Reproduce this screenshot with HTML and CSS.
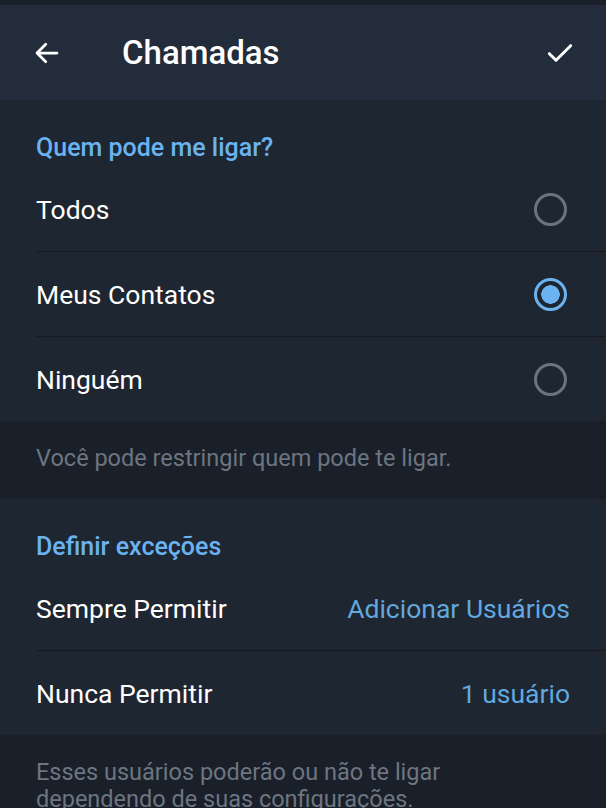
FILE: index.html
```html
<!DOCTYPE html>
<html lang="pt">
<head>
    <meta charset="UTF-8">
    <title>Chamadas</title>
    <link rel="stylesheet" href="styles.css">
</head>
<body>
    <div class="status-strip"></div>
    <header class="toolbar">
        <svg class="icon back" viewBox="0 0 24 24" width="30" height="30">
            <path d="M20 12H4.5M11 5l-7 7 7 7" fill="none" stroke="#fff" stroke-width="2.2" stroke-linecap="round" stroke-linejoin="round"/>
        </svg>
        <h1>Chamadas</h1>
        <svg class="icon done" viewBox="0 0 24 24" width="32" height="32">
            <path d="M4 12.5l5 5L20 6.5" fill="none" stroke="#fff" stroke-width="2.2" stroke-linecap="round" stroke-linejoin="round"/>
        </svg>
    </header>

    <section class="group">
        <h2>Quem pode me ligar?</h2>
        <div class="row">
            <span>Todos</span>
            <span class="radio"></span>
        </div>
        <div class="row">
            <span>Meus Contatos</span>
            <span class="radio checked"></span>
        </div>
        <div class="row last">
            <span>Ninguém</span>
            <span class="radio"></span>
        </div>
    </section>
    <p class="hint">Você pode restringir quem pode te ligar.</p>

    <section class="group">
        <h2>Definir exceções</h2>
        <div class="row">
            <span>Sempre Permitir</span>
            <span class="value">Adicionar Usuários</span>
        </div>
        <div class="row last">
            <span>Nunca Permitir</span>
            <span class="value">1 usuário</span>
        </div>
    </section>
    <p class="hint">Esses usuários poderão ou não te ligar<br>dependendo de suas configurações.</p>
</body>
</html>
```

FILE: styles.css
```css
body {
    margin: 0;
    background-color: #19202a;
    font-family: Roboto, "Noto Sans", sans-serif;
    color: #fff;
    overflow: hidden;
}

.status-strip {
    height: 5px;
    background-color: #1a2029;
}

.toolbar {
    height: 95px;
    background-color: #232c3a;
    display: flex;
    align-items: center;
    padding: 0 30px 0 32px;
}

.toolbar h1 {
    flex: 1;
    margin: 0 0 0 60px;
    font-size: 33px;
    font-weight: 500;
}

.icon {
    display: block;
}

.group {
    background-color: #1e2631;
    padding-left: 36px;
}

.group h2 {
    margin: 0;
    padding: 33px 0 0;
    height: 67px;
    box-sizing: border-box;
    font-size: 25px;
    line-height: 29px;
    font-weight: 500;
    color: #6ab2f0;
}

.row {
    height: 85px;
    display: flex;
    align-items: center;
    justify-content: space-between;
    padding-right: 36px;
    font-size: 26.5px;
    border-bottom: 1px solid #141a22;
    box-sizing: border-box;
}

.row.last {
    border-bottom: none;
    height: 84px;
}

.radio {
    width: 33px;
    height: 33px;
    margin-right: 3px;
    border: 3px solid #6b737e;
    border-radius: 50%;
    box-sizing: border-box;
}

.radio.checked {
    border-color: #6ab2f0;
    background: radial-gradient(circle, #6ab2f0 0, #6ab2f0 9px, #1e2631 9.5px);
}

.value {
    color: #62a8de;
}

.hint {
    margin: 0;
    padding: 24px 36px 27px;
    font-size: 23.5px;
    line-height: 27px;
    color: #6d7580;
}
```
